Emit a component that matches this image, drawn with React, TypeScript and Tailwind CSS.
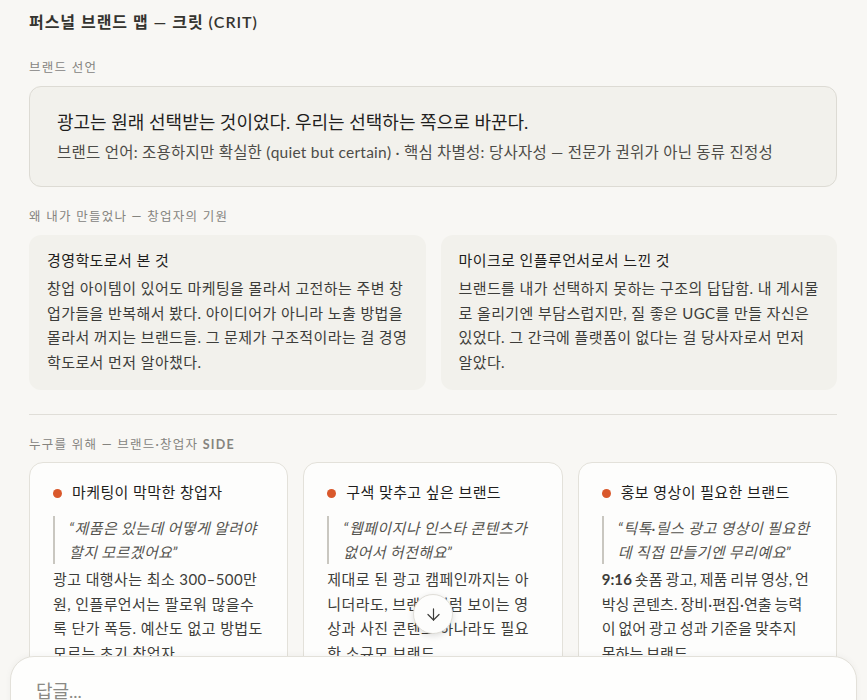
import { ArrowDown } from "lucide-react"

const font = { fontFamily: "Lato, 'Noto Sans CJK KR', sans-serif" }

interface Persona {
  title: string
  quote: string
  body: React.ReactNode
  tight?: boolean
}

const personas: Persona[] = [
  {
    title: "마케팅이 막막한 창업자",
    quote: "\u201C제품은 있는데 어떻게 알려야 할지 모르겠어요\u201D",
    body: "광고 대행사는 최소 300–500만 원, 인플루언서는 팔로워 많을수록 단가 폭등. 예산도 없고 방법도 모르는 초기 창업자.",
  },
  {
    title: "구색 맞추고 싶은 브랜드",
    quote: "\u201C웹페이지나 인스타 콘텐츠가 없어서 허전해요\u201D",
    body: "제대로 된 광고 캠페인까지는 아니더라도, 브랜드처럼 보이는 영상과 사진 콘텐츠 하나라도 필요한 소규모 브랜드.",
  },
  {
    title: "홍보 영상이 필요한 브랜드",
    quote: "\u201C틱톡·릴스 광고 영상이 필요한데 직접 만들기엔 무리예요\u201D",
    body: (
      <>
        <span className="font-bold">9:16</span> 숏폼 광고, 제품 리뷰 영상, 언박싱 콘텐츠. 장비·편집·연출 능력이 없어 광고 성과 기준을 맞추지 못하는 브랜드.
      </>
    ),
    tight: true,
  },
]

function SectionLabel({ children }: { children: React.ReactNode }) {
  return (
    <div className="text-[12.5px] leading-4 tracking-[0.1em] text-[#85847f]">{children}</div>
  )
}

export default function App() {
  return (
    <div style={font} className="relative h-[700px] w-full overflow-hidden bg-[#f8f7f4] text-[#1f1e1d]">
      <div className="px-[29px] pr-[30px] pt-[11px]">
        <h1 className="text-[16px] leading-[22px] font-semibold tracking-[0.06em] text-[#35342f]">
          퍼스널 브랜드 맵 — 크릿 (CRIT)
        </h1>

        <div className="mt-[27px]">
          <SectionLabel>브랜드 선언</SectionLabel>
        </div>
        <div className="mt-[10px] rounded-xl border border-[#dddbd4] bg-[#f2f1ec] px-[27px] pt-[22px] pb-[22px]">
          <p className="text-[18px] leading-[26px] text-[#1f1e1d]">
            광고는 원래 선택받는 것이었다. 우리는 선택하는 쪽으로 바꾼다.
          </p>
          <p className="mt-[5px] text-[15.5px] leading-6 tracking-[0.015em] text-[#4d4c48]">
            브랜드 언어: 조용하지만 확실한 (quiet but certain) · 핵심 차별성: 당사자성 — 전문가 권위가 아닌 동류 진정성
          </p>
        </div>

        <div className="mt-[22px]">
          <SectionLabel>왜 내가 만들었나 — 창업자의 기원</SectionLabel>
        </div>
        <div className="mt-[10px] grid grid-cols-2 gap-[15px] tracking-[0.025em]">
          <div className="rounded-xl bg-[#f2f1ec] px-[18px] pt-[14px] pb-4">
            <h3 className="text-[15px] leading-[22px] text-[#1f1e1d]">경영학도로서 본 것</h3>
            <p className="mt-[5px] text-[15px] leading-[24.5px] text-[#3d3d3a]">
              창업 아이템이 있어도 마케팅을 몰라서 고전하는 주변 창업가들을 반복해서 봤다. 아이디어가 아니라 노출 방법을 몰라서 꺼지는 브랜드들. 그 문제가 구조적이라는 걸 경영학도로서 먼저 알아챘다.
            </p>
          </div>
          <div className="rounded-xl bg-[#f2f1ec] px-[18px] pt-[14px] pb-4">
            <h3 className="text-[15px] leading-[22px] text-[#1f1e1d]">마이크로 인플루언서로서 느낀 것</h3>
            <p className="mt-[5px] text-[15px] leading-[24.5px] text-[#3d3d3a]">
              브랜드를 내가 선택하지 못하는 구조의 답답함. 내 게시물로 올리기엔 부담스럽지만, 질 좋은 UGC를 만들 자신은 있었다. 그 간극에 플랫폼이 없다는 걸 당사자로서 먼저 알았다.
            </p>
          </div>
        </div>

        <div className="mt-[24px] h-px bg-[#e0ded8]" />

        <div className="mt-[22px]">
          <SectionLabel>
            누구를 위해 — 브랜드·창업자 <span className="font-bold">SIDE</span>
          </SectionLabel>
        </div>
        <div className="mt-[9px] grid grid-cols-3 gap-[15px] tracking-[0.025em]">
          {personas.map((p) => (
            <div key={p.title} className="rounded-[14px] border border-[#e3e1da] bg-[#fdfdfc] px-[23px] pt-[18px] pb-5">
              <div className="flex items-center gap-[10px]">
                <span className="mt-[3px] h-[9px] w-[9px] shrink-0 rounded-full bg-[#d9582b]" />
                <h3 className="text-[15px] leading-[22px] text-[#1f1e1d]">{p.title}</h3>
              </div>
              <blockquote className="mt-[13px] border-l-2 border-[#c9c7c0] pl-[14px] text-[15px] leading-6 italic text-[#55544f]">
                {p.quote}
              </blockquote>
              <p
                className={
                  p.tight
                    ? "mt-[3px] text-[15px] leading-[24.5px] tracking-[0.005em] [word-spacing:-1px] text-[#3d3d3a]"
                    : "mt-[3px] text-[15px] leading-[24.5px] text-[#3d3d3a]"
                }
              >
                {p.body}
              </p>
            </div>
          ))}
        </div>
      </div>

      <button className="absolute left-[413px] top-[594px] flex h-10 w-10 items-center justify-center rounded-full border border-[#e0ded8] bg-[#fdfdfc] text-[#3d3d3a] shadow-[0_2px_6px_rgba(0,0,0,0.12)]">
        <ArrowDown size={19} strokeWidth={1.5} />
      </button>

      <div className="absolute left-[10px] right-[10px] top-[656px] h-[80px] rounded-[24px] border border-[#e3e1da] bg-[#fefefd] px-[25px] pt-[20px] shadow-[0_-1px_6px_rgba(0,0,0,0.04)]">
        <div className="text-[18px] leading-7 text-[#8a8984]">답글...</div>
      </div>
    </div>
  )
}
